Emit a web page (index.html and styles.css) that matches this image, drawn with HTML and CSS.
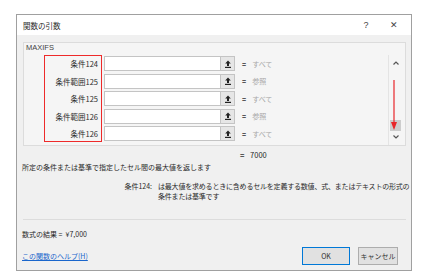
FILE: index.html
```html
<!DOCTYPE html>
<html lang="ja">
<head>
    <meta charset="UTF-8">
    <title>関数の引数</title>
    <link rel="stylesheet" href="styles.css">
</head>
<body>
    <div class="dialog">
        <div class="titlebar">
            <span class="title">関数の引数</span>
            <span class="title-btn help">?</span>
            <span class="title-btn close">✕</span>
        </div>

        <div class="content">
            <div class="group">
                <div class="legend">MAXIFS</div>
                <div class="args">
                    <div class="labels">
                        <div class="label">条件124</div>
                        <div class="label">条件範囲125</div>
                        <div class="label">条件125</div>
                        <div class="label">条件範囲126</div>
                        <div class="label">条件126</div>
                    </div>
                    <div class="fields">
                        <div class="field">
                            <div class="input"></div>
                            <div class="ref-btn"><svg width="8" height="8" viewBox="0 0 8 8"><path d="M4 0.5 L6.8 3.5 H5 V6 H3 V3.5 H1.2 Z" fill="#222"/><rect x="1" y="6.8" width="6" height="1.2" fill="#222"/></svg></div>
                            <span class="eq">=</span>
                            <span class="hint">すべて</span>
                        </div>
                        <div class="field">
                            <div class="input"></div>
                            <div class="ref-btn"><svg width="8" height="8" viewBox="0 0 8 8"><path d="M4 0.5 L6.8 3.5 H5 V6 H3 V3.5 H1.2 Z" fill="#222"/><rect x="1" y="6.8" width="6" height="1.2" fill="#222"/></svg></div>
                            <span class="eq">=</span>
                            <span class="hint">参照</span>
                        </div>
                        <div class="field">
                            <div class="input"></div>
                            <div class="ref-btn"><svg width="8" height="8" viewBox="0 0 8 8"><path d="M4 0.5 L6.8 3.5 H5 V6 H3 V3.5 H1.2 Z" fill="#222"/><rect x="1" y="6.8" width="6" height="1.2" fill="#222"/></svg></div>
                            <span class="eq">=</span>
                            <span class="hint">すべて</span>
                        </div>
                        <div class="field">
                            <div class="input"></div>
                            <div class="ref-btn"><svg width="8" height="8" viewBox="0 0 8 8"><path d="M4 0.5 L6.8 3.5 H5 V6 H3 V3.5 H1.2 Z" fill="#222"/><rect x="1" y="6.8" width="6" height="1.2" fill="#222"/></svg></div>
                            <span class="eq">=</span>
                            <span class="hint">参照</span>
                        </div>
                        <div class="field">
                            <div class="input"></div>
                            <div class="ref-btn"><svg width="8" height="8" viewBox="0 0 8 8"><path d="M4 0.5 L6.8 3.5 H5 V6 H3 V3.5 H1.2 Z" fill="#222"/><rect x="1" y="6.8" width="6" height="1.2" fill="#222"/></svg></div>
                            <span class="eq">=</span>
                            <span class="hint">すべて</span>
                        </div>
                    </div>

                    <!-- barre de défilement avec la flèche rouge d'annotation -->
                    <div class="scrollbar">
                        <div class="scroll-btn"><svg width="6" height="4" viewBox="0 0 6 4"><path d="M0.5 3.5 L3 1 L5.5 3.5" fill="none" stroke="#555" stroke-width="1.2"/></svg></div>
                        <div class="track">
                            <div class="thumb"></div>
                            <svg class="red-arrow" width="8" height="50" viewBox="0 0 8 50"><line x1="4" y1="0" x2="4" y2="44" stroke="#e8262a" stroke-width="1.2"/><path d="M1 42 L7 42 L4 50 Z" fill="#e8262a"/></svg>
                        </div>
                        <div class="scroll-btn"><svg width="6" height="4" viewBox="0 0 6 4"><path d="M0.5 0.5 L3 3 L5.5 0.5" fill="none" stroke="#555" stroke-width="1.2"/></svg></div>
                    </div>
                </div>
            </div>

            <div class="value-line"><span class="eq">=</span> 7000</div>
            <p class="desc">所定の条件または基準で指定したセル間の最大値を返します</p>

            <div class="detail">
                <span class="detail-label">条件124:</span>
                <span class="detail-text">は最大値を求めるときに含めるセルを定義する数値、式、またはテキストの形式の<br>条件または基準です</span>
            </div>

            <div class="separator"></div>

            <p class="result">数式の結果 = &nbsp;¥7,000</p>

            <div class="footer">
                <a href="#" class="help-link">この関数のヘルプ(H)</a>
                <button class="btn btn-ok">OK</button>
                <button class="btn">キャンセル</button>
            </div>
        </div>
    </div>
</body>
</html>
```

FILE: styles.css
```css
body {
    margin: 0;
    padding: 14px 0 0 16px;
    background-color: #fff;
    font-family: "Noto Sans CJK JP", "Liberation Sans", sans-serif;
    font-size: 7px;
    color: #2a2a2a;
}

p {
    margin: 0;
}

.dialog {
    width: 394px;
    border: 1px solid #a0a0a0;
    background-color: #f0f0f0;
    padding-bottom: 5px;
}

.titlebar {
    height: 20px;
    background-color: #fff;
    display: flex;
    align-items: center;
    padding-left: 6px;
    font-size: 7.5px;
}

.title {
    flex: 1;
}

.title-btn {
    width: 28px;
    text-align: center;
    color: #444;
    font-family: "Liberation Sans", sans-serif;
    font-size: 9px;
}

.close {
    margin-right: 3px;
}

.content {
    padding: 0 5px;
}

.group {
    margin: 7px 0 0 1px;
    height: 102px;
    border: 1px solid #dcdcdc;
    background-color: #f5f5f5;
}

.legend {
    line-height: 7px;
    padding: 1px 0 0 2px;
    margin-bottom: 4px;
    font-family: "Liberation Sans", sans-serif;
    font-size: 7.5px;
    color: #444;
}

.args {
    display: flex;
    align-items: flex-start;
    height: 90px;
}

.labels {
    margin-left: 20px;
    width: 53px;
    border: 1.5px solid #ee2a2a;
    padding-right: 3px;
    display: flex;
    flex-direction: column;
    gap: 2.5px;
}

.label {
    height: 15px;
    line-height: 15px;
    text-align: right;
    font-size: 7.5px;
}

.fields {
    margin-left: 2px;
    margin-top: 1px;
    display: flex;
    flex-direction: column;
    gap: 2.5px;
}

.field {
    height: 15px;
    display: flex;
    align-items: center;
}

.input {
    width: 115px;
    height: 13px;
    border: 1px solid #c4c4c4;
    background-color: #fff;
}

.ref-btn {
    width: 13px;
    height: 13px;
    border: 1px solid #c4c4c4;
    border-left: none;
    background-color: #e6e6e6;
    display: flex;
    align-items: center;
    justify-content: center;
}

.eq {
    margin-left: 7px;
    font-weight: bold;
    color: #333;
}

.hint {
    margin-left: 6px;
    color: #a8a8a8;
}

.scrollbar {
    margin-left: auto;
    margin-right: 3px;
    width: 13px;
    height: 90px;
    border-left: 1px solid #e4e4e4;
    display: flex;
    flex-direction: column;
}

.scroll-btn {
    height: 16px;
    display: flex;
    align-items: center;
    justify-content: center;
}

.track {
    flex: 1;
    position: relative;
    display: flex;
    align-items: flex-end;
    justify-content: center;
}

.thumb {
    width: 11px;
    height: 11px;
    margin-bottom: -2px;
    background-color: #cdcdcd;
}

.red-arrow {
    position: absolute;
    left: 1px;
    top: 9px;
}

.value-line {
    margin-top: 4px;
    padding-left: 218px;
    line-height: 10px;
    font-size: 7.5px;
}

.value-line .eq {
    margin-left: 0;
    margin-right: 4px;
}

.desc {
    margin-top: 2px;
    line-height: 10px;
}

.detail {
    margin-top: 9px;
    display: flex;
    line-height: 10px;
    white-space: nowrap;
}

.detail-label {
    width: 130px;
    text-align: right;
    flex-shrink: 0;
}

.detail-text {
    margin-left: 6px;
    letter-spacing: -0.2px;
}

.separator {
    margin: 18px 0 0 1px;
    border-top: 1px solid #dcdcdc;
}

.result {
    margin-top: 9px;
    line-height: 10px;
}

.footer {
    margin-top: 8px;
    display: flex;
    align-items: center;
    padding-right: 8px;
}

.help-link {
    flex: 1;
    color: #1a66cc;
    text-decoration: underline;
}

.btn {
    height: 18px;
    width: 40px;
    padding: 0;
    margin-left: 8px;
    border: 1px solid #adadad;
    border-radius: 0;
    background-color: #e1e1e1;
    font-family: "Noto Sans CJK JP", "Liberation Sans", sans-serif;
    font-size: 7px;
    color: #333;
}

.btn-ok {
    width: 48px;
    border-color: #0078d7;
}
```
